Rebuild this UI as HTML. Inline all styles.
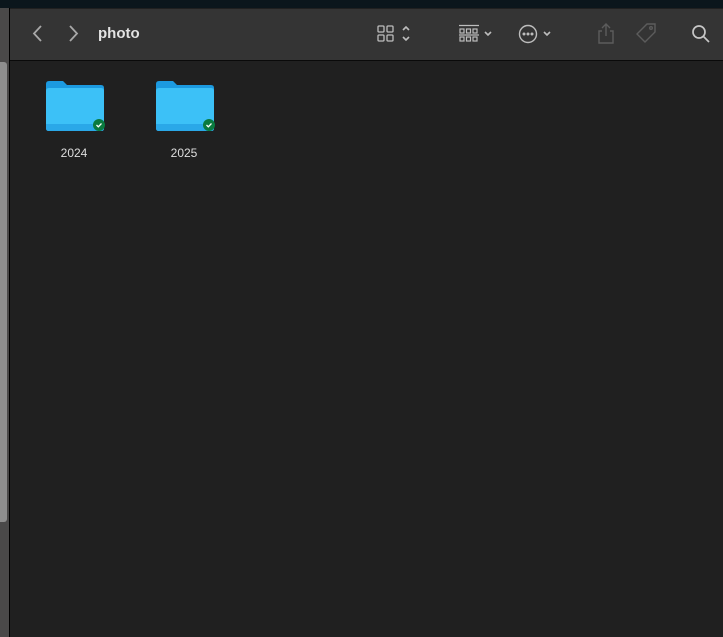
<!DOCTYPE html>
<html><head><style>
*{margin:0;padding:0;box-sizing:border-box}
body{width:723px;height:637px;background:#202020;position:relative;overflow:hidden;font-family:"Liberation Sans",sans-serif}
.top{position:absolute;left:0;top:0;width:723px;height:8px;background:#0b161c}
.side{position:absolute;left:0;top:8px;width:9px;height:629px;background:#4a4949}
.sb{position:absolute;left:0;top:62px;width:7px;height:460px;background:#8e8e8e;border-radius:0 3px 3px 0}
.sep{position:absolute;left:9px;top:8px;width:1px;height:629px;background:#000}
.tb{position:absolute;left:10px;top:9px;right:0;height:52px;background:#343434;border-bottom:1px solid #0a0a0a}
.title{position:absolute;left:98px;top:25px;color:#e2e2e2;font-weight:bold;font-size:15px}
.f{position:absolute;top:80px}
.lbl{position:absolute;top:146px;color:#dedede;font-size:12px;width:60px;text-align:center}
svg{position:absolute}
</style></head><body>
<div class="top"></div><div class="side"></div><div class="sb"></div><div class="sep"></div>
<div class="tb"></div>
<svg style="left:30px;top:24px" width="16" height="20"><path d="M11 2 L4 9.5 L11 17" stroke="#a8a8a8" stroke-width="1.8" fill="none"/></svg>
<svg style="left:66px;top:24px" width="16" height="20"><path d="M4 2 L11 9.5 L4 17" stroke="#a8a8a8" stroke-width="1.8" fill="none"/></svg>
<div class="title">photo</div>
<svg style="left:376px;top:24px" width="40" height="20" fill="none" stroke="#bdbdbd" stroke-width="1.3"><rect x="2" y="2" width="6" height="6" rx="1"/><rect x="11" y="2" width="6" height="6" rx="1"/><rect x="2" y="11" width="6" height="6" rx="1"/><rect x="11" y="11" width="6" height="6" rx="1"/><path d="M27 6 L30 3 L33 6 M27 13 L30 16 L33 13" stroke-width="1.6"/></svg>
<svg style="left:458px;top:24px" width="40" height="20" fill="none" stroke="#bdbdbd" stroke-width="1.2"><path d="M1 1.5H21"/><rect x="2" y="5" width="4" height="4"/><rect x="8.5" y="5" width="4" height="4"/><rect x="15" y="5" width="4" height="4"/><path d="M1 11H21"/><rect x="2" y="13" width="4" height="4"/><rect x="8.5" y="13" width="4" height="4"/><rect x="15" y="13" width="4" height="4"/><path d="M27 8L30 11L33 8" stroke-width="1.6"/></svg>
<svg style="left:517px;top:24px" width="40" height="20" fill="none" stroke="#bdbdbd" stroke-width="1.4"><circle cx="11" cy="10" r="8.5"/><circle cx="7" cy="10" r="0.8" fill="#bdbdbd"/><circle cx="11" cy="10" r="0.8" fill="#bdbdbd"/><circle cx="15" cy="10" r="0.8" fill="#bdbdbd"/><path d="M27 8L30 11L33 8" stroke-width="1.6"/></svg>
<svg style="left:596px;top:22px" width="20" height="24" fill="none" stroke="#5c5c5c" stroke-width="1.4"><path d="M10 2V14M6 6L10 2L14 6M6 9H3V21H17V9H14"/></svg>
<svg style="left:634px;top:22px" width="24" height="24" fill="none" stroke="#5c5c5c" stroke-width="1.4"><path d="M13 2H21V10L11 20L3 12Z"/><circle cx="17" cy="6" r="1.3"/></svg>
<svg style="left:691px;top:24px" width="20" height="20" fill="none" stroke="#c6c6c6" stroke-width="1.7"><circle cx="8" cy="8" r="6"/><path d="M12.5 12.5L18 18"/></svg>
<svg class="f" style="left:45px" width="62" height="54"><path d="M1 4Q1 1 4 1H18L22 5H56Q59 5 59 8V48Q59 51 56 51H4Q1 51 1 48Z" fill="#1c9ae0"/><path d="M1 11Q1 8 4 8H56Q59 8 59 11V48Q59 51 56 51H4Q1 51 1 48Z" fill="#3cc1f7"/><path d="M1 44H59V48Q59 51 56 51H4Q1 51 1 48Z" fill="#2aa8e8"/><circle cx="54" cy="45" r="6" fill="#0a7a3e"/><path d="M51.5 45L53.3 46.8L56.5 43.5" stroke="#fff" stroke-width="1.3" fill="none"/></svg>
<svg class="f" style="left:155px" width="62" height="54"><path d="M1 4Q1 1 4 1H18L22 5H56Q59 5 59 8V48Q59 51 56 51H4Q1 51 1 48Z" fill="#1c9ae0"/><path d="M1 11Q1 8 4 8H56Q59 8 59 11V48Q59 51 56 51H4Q1 51 1 48Z" fill="#3cc1f7"/><path d="M1 44H59V48Q59 51 56 51H4Q1 51 1 48Z" fill="#2aa8e8"/><circle cx="54" cy="45" r="6" fill="#0a7a3e"/><path d="M51.5 45L53.3 46.8L56.5 43.5" stroke="#fff" stroke-width="1.3" fill="none"/></svg>
<div class="lbl" style="left:44px">2024</div>
<div class="lbl" style="left:154px">2025</div>
</body></html>
